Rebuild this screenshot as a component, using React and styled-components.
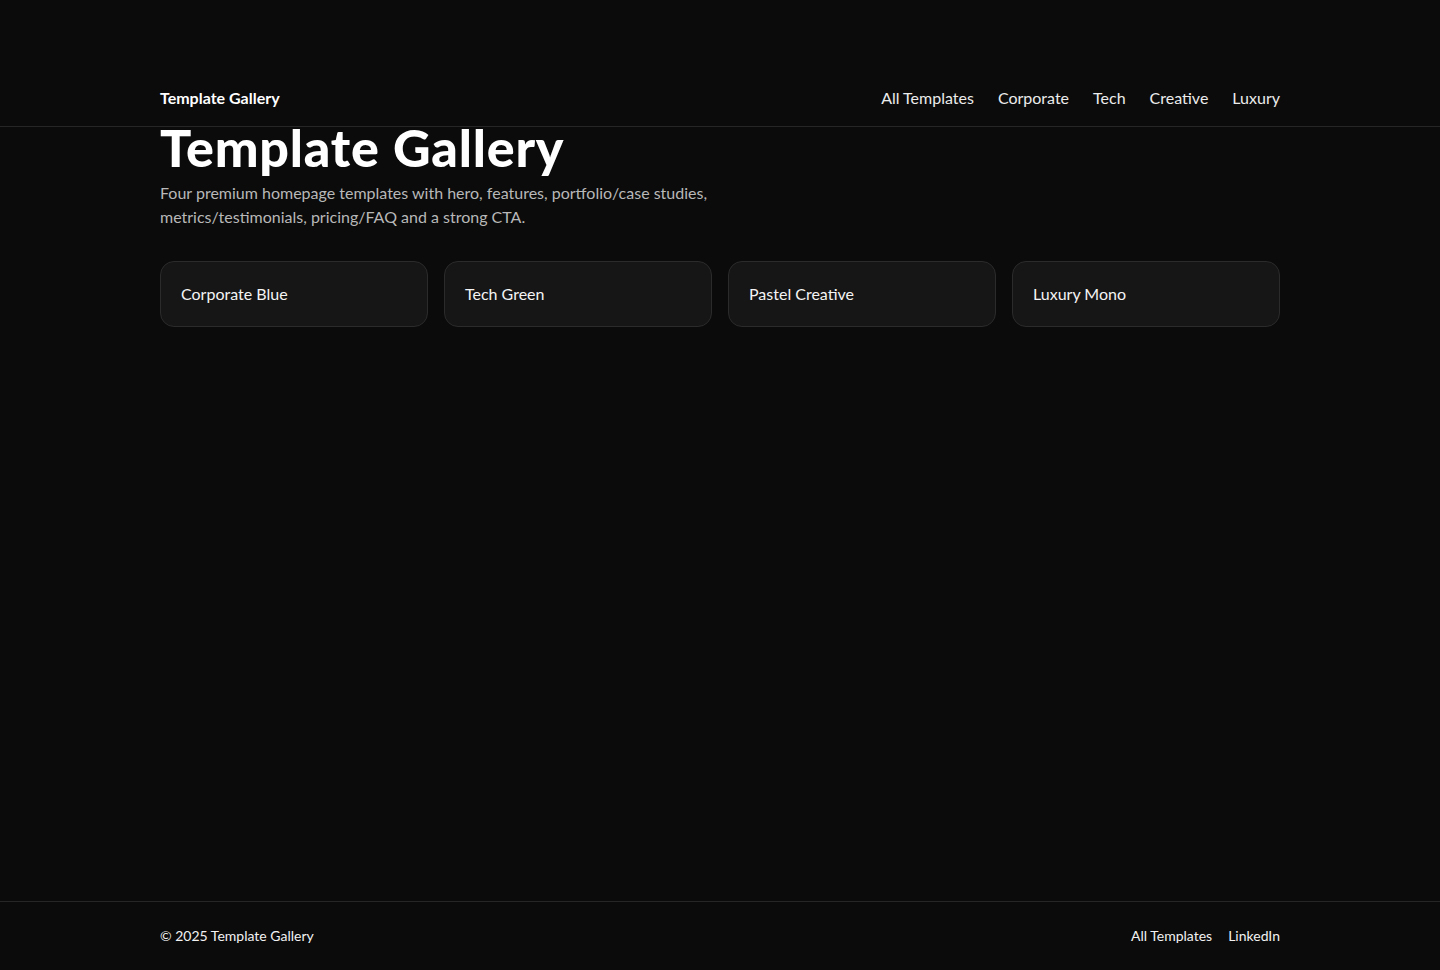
import React from "react";
import styled, { createGlobalStyle } from "styled-components";

const GlobalStyle = createGlobalStyle`
  * { box-sizing: border-box; }
  html, body { margin: 0; padding: 0; background: #0b0b0b; }
  body {
    font-family: "Lato", "Open Sans", "Noto Sans", sans-serif;
    color: #f2f2f2;
    -webkit-font-smoothing: antialiased;
  }
  a { color: inherit; text-decoration: none; }
`;

const Page = styled.div`
  min-height: 100vh;
  display: flex;
  flex-direction: column;
  background: #0b0b0b;
`;

const Container = styled.div`
  width: 1120px;
  margin: 0 auto;
`;

const Header = styled.header`
  border-bottom: 1px solid #262626;
  padding: 85px 0 17px;
`;

const HeaderRow = styled(Container)`
  display: flex;
  align-items: center;
  justify-content: space-between;
  height: 24px;
`;

const Brand = styled.a`
  font-size: 16px;
  font-weight: 700;
  color: #ffffff;
`;

const Nav = styled.nav`
  display: flex;
  gap: 24px;
  font-size: 16px;
  color: #ececec;
`;

const Main = styled.main`
  flex: 1;
`;

const Title = styled.h1`
  margin: 0;
  font-size: 52px;
  line-height: 40px;
  padding-bottom: 6px;
  font-weight: 900;
  color: #ffffff;
  letter-spacing: 0.8px;
`;

const Lead = styled.p`
  margin: 8px 0 0;
  max-width: 560px;
  font-size: 16px;
  line-height: 24px;
  color: #b8b8b8;
`;

const Grid = styled.div`
  margin-top: 32px;
  display: grid;
  grid-template-columns: repeat(4, 1fr);
  gap: 16px;
`;

const Card = styled.a`
  display: flex;
  align-items: center;
  height: 66px;
  padding: 0 20px 2px;
  background: #161616;
  border: 1px solid #2b2b2b;
  border-radius: 14px;
  font-size: 16px;
  color: #f4f4f4;
`;

const Footer = styled.footer`
  border-top: 1px solid #262626;
  padding: 23px 0 25px;
`;

const FooterRow = styled(Container)`
  display: flex;
  align-items: center;
  justify-content: space-between;
  height: 20px;
  font-size: 14px;
  color: #f2f2f2;
`;

const FooterLinks = styled.div`
  display: flex;
  gap: 16px;
`;

const templates = ["Corporate Blue", "Tech Green", "Pastel Creative", "Luxury Mono"];

export default function App() {
  return (
    <Page>
      <GlobalStyle />
      <Header>
        <HeaderRow>
          <Brand href="#">Template Gallery</Brand>
          <Nav>
            <a href="#">All Templates</a>
            <a href="#">Corporate</a>
            <a href="#">Tech</a>
            <a href="#">Creative</a>
            <a href="#">Luxury</a>
          </Nav>
        </HeaderRow>
      </Header>
      <Main>
        <Container>
          <Title>Template Gallery</Title>
          <Lead>
            Four premium homepage templates with hero, features, portfolio/case studies,
            metrics/testimonials, pricing/FAQ and a strong CTA.
          </Lead>
          <Grid>
            {templates.map((t) => (
              <Card href="#" key={t}>{t}</Card>
            ))}
          </Grid>
        </Container>
      </Main>
      <Footer>
        <FooterRow>
          <span>© 2025 Template Gallery</span>
          <FooterLinks>
            <a href="#">All Templates</a>
            <a href="#">LinkedIn</a>
          </FooterLinks>
        </FooterRow>
      </Footer>
    </Page>
  );
}
